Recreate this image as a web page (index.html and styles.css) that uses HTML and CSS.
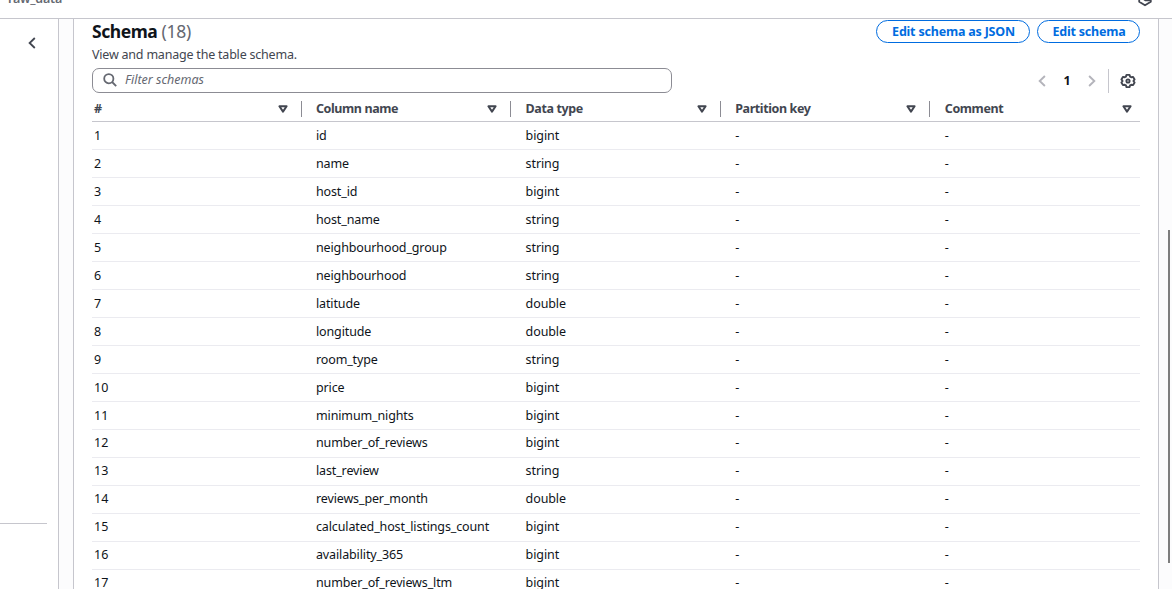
FILE: index.html
```html
<!DOCTYPE html>
<html lang="en">
<head>
<meta charset="utf-8">
<title>raw_data</title>
<link rel="stylesheet" href="styles.css">
</head>
<body>
<svg width="0" height="0" class="defs">
  <symbol id="sort" viewBox="0 0 10 8"><path d="M1.4 1.3h7.2L5 6.6z" fill="none" stroke="#424650" stroke-width="2" stroke-linejoin="round"/></symbol>
</svg>
<header class="topbar">
  <span class="crumb">raw_data</span>
  <svg class="hex" width="16" height="16" viewBox="0 0 16 16" fill="none" stroke="#424650" stroke-width="1.8"><path d="M2.2 5v5.8L8 14.3l5.8-3.5V9.4H8.6L6.5 8" stroke-linejoin="round"/></svg>
</header>
<div class="layout">
  <nav class="side">
    <svg class="back" width="8" height="12" viewBox="0 0 8 12" fill="none" stroke="#424650" stroke-width="1.8"><path d="M6.8 1L1.6 6l5.2 5"/></svg>
    <hr class="rule">
  </nav>
  <main class="content">
    <section class="panel">
      <div class="head">
        <div>
          <h2 class="title"><span class="name">Schema</span> <span class="count">(18)</span></h2>
          <p class="desc"><span>View and manage the table schema.</span></p>
        </div>
        <div class="actions">
          <button class="btn json"><span>Edit schema as JSON</span></button>
          <button class="btn edit"><span>Edit schema</span></button>
        </div>
      </div>
      <div class="tools">
        <div class="search">
          <svg width="14" height="14" viewBox="0 0 14 14" fill="none" stroke="#656871" stroke-width="1.8"><circle cx="5.8" cy="5.7" r="4.6"/><path d="M9.1 9l4.1 4.1"/></svg>
          <span>Filter schemas</span>
        </div>
        <div class="pager">
          <svg width="8" height="12" viewBox="0 0 8 12" fill="none" stroke="#b4b4bb" stroke-width="1.9"><path d="M6.9 1L1.7 6l5.2 5"/></svg>
          <b class="page">1</b>
          <svg width="8" height="12" viewBox="0 0 8 12" fill="none" stroke="#b4b4bb" stroke-width="1.9"><path d="M1.1 1l5.2 5-5.2 5"/></svg>
          <i class="bar"></i>
          <svg class="gear" width="16" height="16" viewBox="0 0 16 16" fill="none" stroke="#424650" stroke-width="1.9" stroke-linejoin="round"><path d="M6.5 1.9h3l.6 1.7 1.2.7 1.8-.4 1.5 2.5L13.4 8l1.2 1.6-1.5 2.5-1.8-.4-1.2.7-.6 1.7h-3l-.6-1.7-1.2-.7-1.8.4-1.5-2.5L2.6 8 1.4 6.4l1.5-2.5 1.8.4 1.2-.7z"/><circle cx="8" cy="8" r="1.6"/></svg>
        </div>
      </div>
      <div class="table">
        <div class="row th">
          <div class="cell"><span>#</span><svg width="10" height="8"><use href="#sort"/></svg></div>
          <div class="cell"><span>Column name</span><svg width="10" height="8"><use href="#sort"/></svg></div>
          <div class="cell"><span>Data type</span><svg width="10" height="8"><use href="#sort"/></svg></div>
          <div class="cell"><span>Partition key</span><svg width="10" height="8"><use href="#sort"/></svg></div>
          <div class="cell"><span>Comment</span><svg width="10" height="8"><use href="#sort"/></svg></div>
        </div>
        <div class="row"><div class="cell">1</div><div class="cell">id</div><div class="cell">bigint</div><div class="cell">-</div><div class="cell">-</div></div>
        <div class="row"><div class="cell">2</div><div class="cell">name</div><div class="cell">string</div><div class="cell">-</div><div class="cell">-</div></div>
        <div class="row"><div class="cell">3</div><div class="cell">host_id</div><div class="cell">bigint</div><div class="cell">-</div><div class="cell">-</div></div>
        <div class="row"><div class="cell">4</div><div class="cell">host_name</div><div class="cell">string</div><div class="cell">-</div><div class="cell">-</div></div>
        <div class="row"><div class="cell">5</div><div class="cell">neighbourhood_group</div><div class="cell">string</div><div class="cell">-</div><div class="cell">-</div></div>
        <div class="row"><div class="cell">6</div><div class="cell">neighbourhood</div><div class="cell">string</div><div class="cell">-</div><div class="cell">-</div></div>
        <div class="row"><div class="cell">7</div><div class="cell">latitude</div><div class="cell">double</div><div class="cell">-</div><div class="cell">-</div></div>
        <div class="row"><div class="cell">8</div><div class="cell">longitude</div><div class="cell">double</div><div class="cell">-</div><div class="cell">-</div></div>
        <div class="row"><div class="cell">9</div><div class="cell">room_type</div><div class="cell">string</div><div class="cell">-</div><div class="cell">-</div></div>
        <div class="row"><div class="cell">10</div><div class="cell">price</div><div class="cell">bigint</div><div class="cell">-</div><div class="cell">-</div></div>
        <div class="row"><div class="cell">11</div><div class="cell">minimum_nights</div><div class="cell">bigint</div><div class="cell">-</div><div class="cell">-</div></div>
        <div class="row late"><div class="cell">12</div><div class="cell">number_of_reviews</div><div class="cell">bigint</div><div class="cell">-</div><div class="cell">-</div></div>
        <div class="row late"><div class="cell">13</div><div class="cell">last_review</div><div class="cell">string</div><div class="cell">-</div><div class="cell">-</div></div>
        <div class="row late"><div class="cell">14</div><div class="cell">reviews_per_month</div><div class="cell">double</div><div class="cell">-</div><div class="cell">-</div></div>
        <div class="row late"><div class="cell">15</div><div class="cell">calculated_host_listings_count</div><div class="cell">bigint</div><div class="cell">-</div><div class="cell">-</div></div>
        <div class="row late"><div class="cell">16</div><div class="cell">availability_365</div><div class="cell">bigint</div><div class="cell">-</div><div class="cell">-</div></div>
        <div class="row late"><div class="cell">17</div><div class="cell">number_of_reviews_ltm</div><div class="cell">bigint</div><div class="cell">-</div><div class="cell">-</div></div>
      </div>
    </section>
    <div class="thumb"></div>
  </main>
</div>
</body>
</html>
```
FILE: styles.css
```css
* { box-sizing: border-box; }
body { margin: 0; height: 589px; overflow: hidden; display: flex; flex-direction: column; background: #fff; color: #0f141a; font: 12.5px/20px "Noto Sans", "Open Sans", sans-serif; }
.defs { display: none; }
svg { flex: none; display: block; }
.topbar { flex: none; height: 19px; overflow: hidden; border-bottom: 1px solid #c6c6cd; display: flex; justify-content: space-between; align-items: flex-start; padding: 0 19px 0 8px; }
.crumb { margin-top: -11px; font-weight: 600; color: #656871; letter-spacing: -0.2px; }
.hex { margin-top: -9px; }
.layout { flex: 1; min-height: 0; display: flex; }
.side { width: 59px; flex: none; border-right: 1px solid #c6c6cd; padding-top: 18px; }
.back { margin-left: 28px; }
.rule { width: 47px; margin: 474px 0 0; border: 0; border-top: 1px solid #c6c6cd; }
.content { flex: 1; min-width: 0; display: flex; background: #fcfcfd; padding-left: 14px; }
.panel { width: 1086px; flex: none; overflow: hidden; background: #fff; border: solid #c6c6cd; border-width: 0 1px; padding: 0 18px; }
.head { height: 49px; display: flex; justify-content: space-between; white-space: nowrap; }
.title { margin: 0 0 1px; font-size: 17.5px; line-height: 25px; letter-spacing: -0.45px; }
.name { font-weight: 700; }
.count { font-weight: 400; color: #656871; letter-spacing: -0.2px; }
.desc { margin: 0; color: #424650; letter-spacing: -0.21px; }
.actions { display: flex; gap: 7px; padding-top: 1px; }
.btn { height: 23px; border: 1px solid #006ce0; border-radius: 12px; background: #fff; color: #006ce0; font: 700 12.5px/20px "Noto Sans", sans-serif; padding: 0 0 0 1px; letter-spacing: -0.2px; }
.json { width: 154px; }
.edit { width: 103px; }
.tools { height: 25px; display: flex; justify-content: space-between; }
.search { width: 580px; height: 25px; border: 1px solid #8c8c94; border-radius: 7px; display: flex; align-items: center; gap: 8px; padding: 0 0 1px 10px; color: #656871; font-style: italic; }
.pager { display: flex; align-items: center; padding-right: 4px; }
.page { width: 8px; margin: 0 17px 0 17px; text-align: center; }
.bar { width: 1px; height: 24px; background: #c6c6cd; margin: 0 11px 0 12px; }
.row { height: 28px; display: grid; grid-template-columns: repeat(5, 1fr); border-bottom: 1px solid #ebebf0; }
.cell { padding: 4px 13px 0 14.4px; letter-spacing: -0.1px; }
.cell:nth-child(2) { letter-spacing: -0.13px; }
.cell:first-child { padding-left: 2px; letter-spacing: 0; }
.late .cell { padding-top: 3px; }
.th { height: 29px; padding-top: 3px; border-color: #c6c6cd; align-items: center; font-weight: 700; color: #424650; }
.row.th .cell { height: 16px; padding-top: 0; letter-spacing: -0.4px; display: flex; align-items: center; justify-content: space-between; border-right: 1px solid #8c8c94; }
.row.th .cell:last-child { border: 0; padding-right: 8px; }
.thumb { width: 2px; height: 333px; margin: 211px 0 0 9px; background: #7d7d7d; }
```
